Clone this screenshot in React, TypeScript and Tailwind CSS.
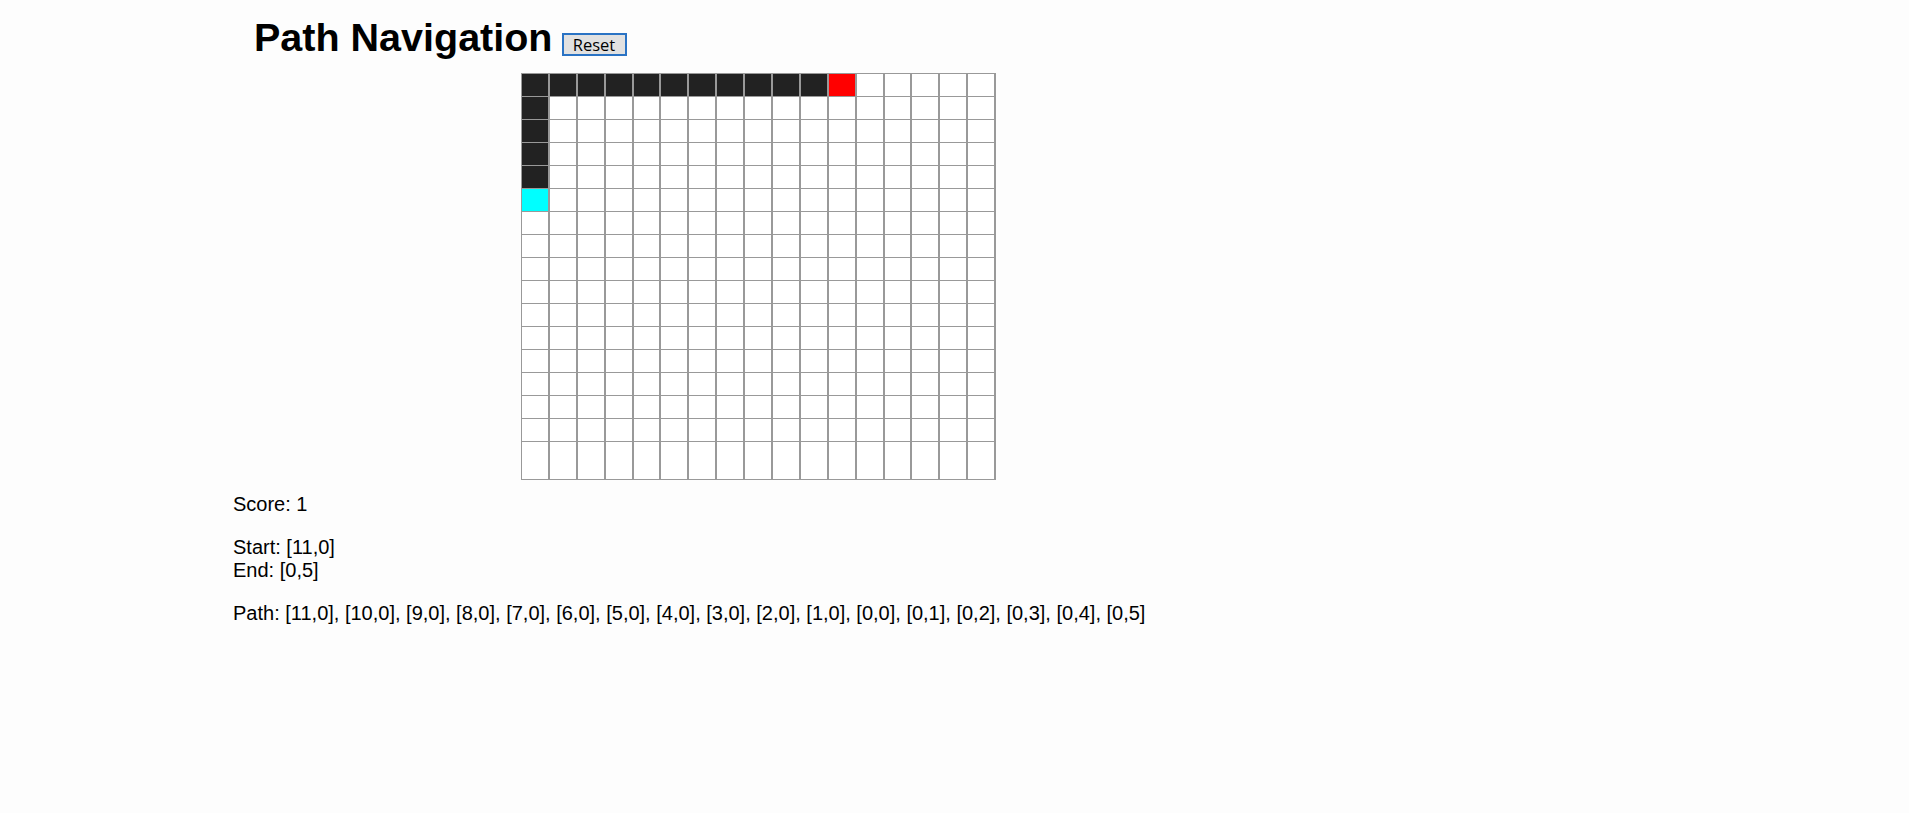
import React from 'react';

const COLS = 17;
const ROWS = 17;

const start: [number, number] = [11, 0];
const end: [number, number] = [0, 5];
const path: [number, number][] = [
  [11, 0], [10, 0], [9, 0], [8, 0], [7, 0], [6, 0], [5, 0], [4, 0], [3, 0],
  [2, 0], [1, 0], [0, 0], [0, 1], [0, 2], [0, 3], [0, 4], [0, 5],
];

const cellColor = (x: number, y: number) => {
  if (x === start[0] && y === start[1]) return 'bg-[#ff0000]';
  if (x === end[0] && y === end[1]) return 'bg-[#00ffff]';
  if (path.some(([px, py]) => px === x && py === y)) return 'bg-[#222222]';
  return 'bg-white';
};

const Grid: React.FC = () => (
  <div className="inline-flex flex-col border-l border-t border-[#999999]">
    {Array.from({ length: ROWS }, (_, y) => (
      <div key={y} className="flex">
        {Array.from({ length: COLS }, (_, x) => (
          <div
            key={x}
            className={`w-[27.9px] border-r-2 border-b border-[#999999] ${
              y === ROWS - 1 ? 'h-[38px]' : 'h-[23px]'
            } ${cellColor(x, y)}`}
          />
        ))}
      </div>
    ))}
  </div>
);

export default function App() {
  return (
    <div className="min-h-screen bg-[#fdfdfd] text-black font-['Liberation_Sans',Arial,sans-serif] text-[20px] leading-[23px]">
      <div className="flex items-baseline gap-[9px] pl-[254px] pt-[14px]">
        <h1 className="text-[39.5px] font-bold leading-[46px]">Path Navigation</h1>
        <button className="h-[23px] w-[65px] border-2 border-[#2a73c4] bg-[#e1e1e1] font-['Open_Sans',sans-serif] text-[16.5px] leading-[19px] text-black">
          Reset
        </button>
      </div>

      <div className="ml-[521px] mt-[13px]">
        <Grid />
      </div>

      <div className="ml-[233px] mt-[13px]">
        <p>Score: 1</p>
        <p className="mt-[20px]">
          Start: [{start[0]},{start[1]}]
          <br />
          End: [{end[0]},{end[1]}]
        </p>
        <p className="mt-[20px]">
          Path: {path.map(([x, y]) => `[${x},${y}]`).join(', ')}
        </p>
      </div>
    </div>
  );
}
